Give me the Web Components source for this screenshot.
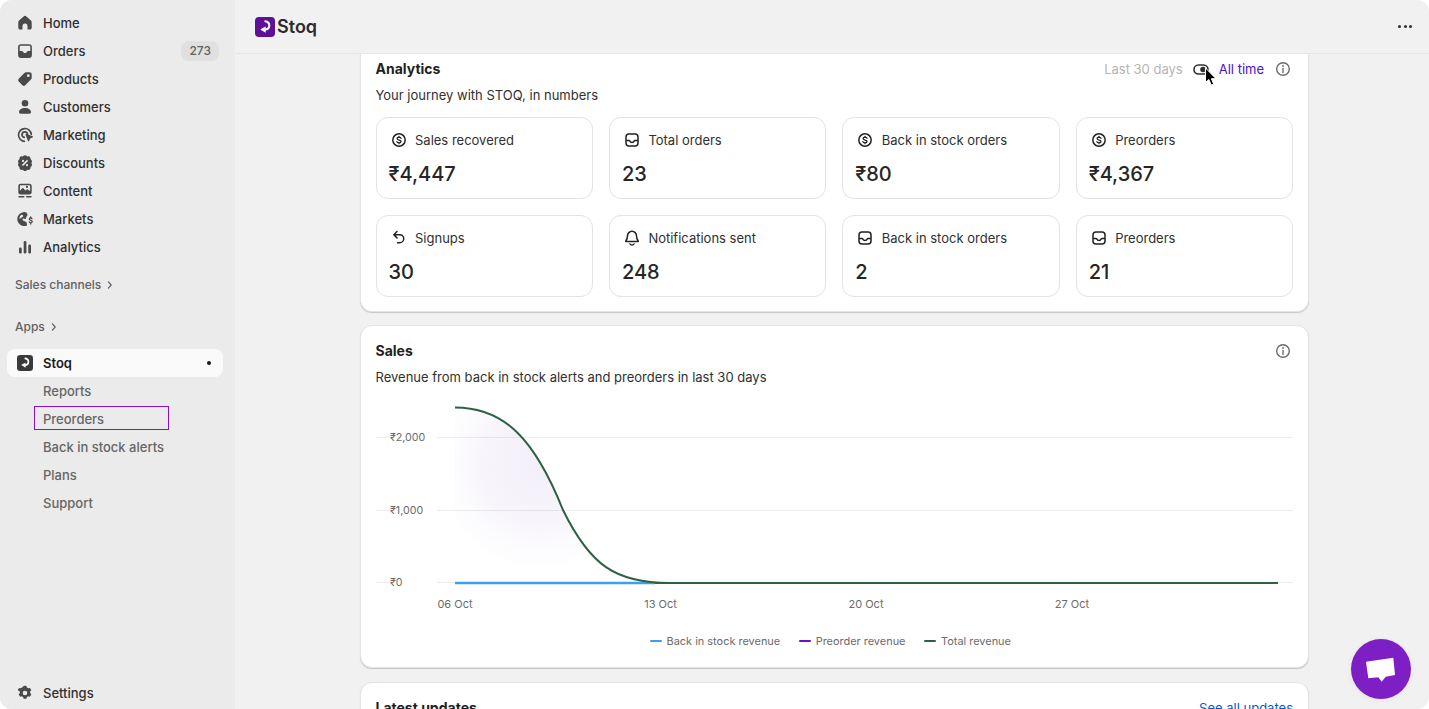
<!DOCTYPE html>
<html lang="en">
<head>
<meta charset="utf-8">
<title>Stoq</title>
<style>
html,body{margin:0;height:100%;background:#fff;overflow:hidden}
body{font-family:Inter,"Noto Sans",sans-serif;font-size:13px;color:#303030}
</style>
</head>
<body>
<app-shell>
  <side-nav slot="nav">
    <nav-item icon="home">Home</nav-item>
    <nav-item icon="orders" badge="273">Orders</nav-item>
    <nav-item icon="products">Products</nav-item>
    <nav-item icon="customers">Customers</nav-item>
    <nav-item icon="marketing">Marketing</nav-item>
    <nav-item icon="discounts">Discounts</nav-item>
    <nav-item icon="content">Content</nav-item>
    <nav-item icon="markets">Markets</nav-item>
    <nav-item icon="analytics">Analytics</nav-item>
    <nav-section style="margin-top:14px">Sales channels</nav-section>
    <nav-section style="margin-top:22px">Apps</nav-section>
    <nav-item icon="logo" active style="margin-top:12px">Stoq</nav-item>
    <nav-sub>Reports</nav-sub>
    <nav-sub outlined>Preorders</nav-sub>
    <nav-sub>Back in stock alerts</nav-sub>
    <nav-sub>Plans</nav-sub>
    <nav-sub>Support</nav-sub>
    <nav-item icon="settings" slot="foot">Settings</nav-item>
  </side-nav>
  <top-bar slot="top"></top-bar>
  <analytics-card>
    <stat-card icon="dollar" label="Sales recovered" value="₹4,447"></stat-card>
    <stat-card icon="inbox" label="Total orders" value="23"></stat-card>
    <stat-card icon="dollar" label="Back in stock orders" value="₹80"></stat-card>
    <stat-card icon="dollar" label="Preorders" value="₹4,367"></stat-card>
    <stat-card icon="undo" label="Signups" value="30"></stat-card>
    <stat-card icon="bell" label="Notifications sent" value="248"></stat-card>
    <stat-card icon="inbox" label="Back in stock orders" value="2"></stat-card>
    <stat-card icon="inbox" label="Preorders" value="21"></stat-card>
  </analytics-card>
  <sales-card></sales-card>
  <updates-card></updates-card>
  <chat-fab slot="overlay"></chat-fab>
</app-shell>
<script>
const ICONS = {
  home:'<path fill="currentColor" d="M8.600 3.500 4.300 7.200A3 3 0 0 0 3.300 9.500v5.200c0 1 .8 1.800 1.800 1.800h2.400V13a2.500 2.500 0 0 1 5 0v3.500h2.400c1 0 1.800-.8 1.800-1.800V9.500a3 3 0 0 0-1-2.300l-4.300-3.700a2.100 2.100 0 0 0-2.800 0z"/>',
  orders:'<path fill="currentColor" fill-rule="evenodd" d="M6 3.200h8A2.900 2.900 0 0 1 16.900 6.100v8a2.900 2.900 0 0 1-2.900 2.900H6a2.900 2.900 0 0 1-2.900-2.900V6.100A2.900 2.900 0 0 1 6 3.200zM5.800 4.800c-.6 0-1.100.5-1.100 1.100V10h2.200c.6 0 1 .3 1.200.8.300.8 1 1.300 1.900 1.300s1.600-.5 1.900-1.300c.2-.5.6-.8 1.200-.8h2.200V5.900c0-.6-.5-1.100-1.100-1.100z"/>',
  products:'<path fill="currentColor" fill-rule="evenodd" d="M11.200 3.300h3.400c1.200 0 2.100.9 2.100 2.100v3.400c0 .7-.3 1.300-.8 1.800l-5.700 5.700a2 2 0 0 1-2.800 0l-3.700-3.700a2 2 0 0 1 0-2.800L9.400 4.100c.5-.5 1.100-.8 1.800-.8zM13.300 8.100a1.400 1.400 0 1 0 0-2.800 1.400 1.400 0 0 0 0 2.800z"/>',
  customers:'<circle cx="10" cy="6.300" r="3.300" fill="currentColor"/><path fill="currentColor" d="M10 11c-3.600 0-6 1.700-6 4 0 1 .7 1.700 1.700 1.700h8.600c1 0 1.700-.7 1.700-1.700 0-2.300-2.400-4-6-4z"/>',
  marketing:'<path fill="none" stroke="currentColor" stroke-width="1.700" stroke-linecap="round" d="M16.300 9.300a6.400 6.400 0 1 0-6.900 7"/><path fill="none" stroke="currentColor" stroke-width="1.700" stroke-linecap="round" d="M12.600 9.300a2.800 2.800 0 1 0-3.300 3.100"/><path fill="currentColor" d="M10.600 9.900c-.2-.5.300-1 .8-.8l6.200 2.200c.6.200.6 1 0 1.200l-2.500.9-.9 2.500c-.2.600-1 .6-1.200 0z"/>',
  discounts:'<path fill="currentColor" fill-rule="evenodd" d="M8.500 2.700c.8-.7 2.200-.7 3 0l.8.7 1.100-.1c1.100-.1 2 .8 2.100 1.900l.1 1.100.8.700c.8.800.8 2.200 0 3l-.1.100.1.100c.8.800.8 2.200 0 3l-.8.700-.1 1.100c-.1 1.100-1 2-2.100 1.900l-1.100-.1-.8.700c-.8.700-2.200.7-3 0l-.8-.7-1.100.1c-1.100.1-2-.8-2.100-1.900l-.1-1.100-.8-.7c-.8-.8-.8-2.200 0-3l.1-.1-.1-.1c-.8-.8-.8-2.200 0-3l.8-.7.1-1.100c.1-1.100 1-2 2.100-1.900l1.100.1zM12.600 7.300a.8.8 0 0 0-1.100 0l-4.300 4.300a.8.800 0 0 0 1.100 1.100l4.300-4.300a.8.800 0 0 0 0-1.100zM8 9a1.100 1.100 0 1 0 0-2.200A1.100 1.100 0 0 0 8 9zm4 4.300a1.100 1.100 0 1 0 0-2.200 1.100 1.100 0 0 0 0 2.200z"/>',
  content:'<path fill="currentColor" fill-rule="evenodd" d="M5.500 2.700h9c1.200 0 2.200 1 2.200 2.200v6.300c0 1.200-1 2.200-2.200 2.200h-9a2.200 2.200 0 0 1-2.200-2.200V4.900c0-1.200 1-2.200 2.200-2.200zM4.900 9.800l2.400-2.500c.3-.3.700-.3 1 0l2.200 2.100 1.300-1c.3-.2.700-.2 1 0l2.300 1.700V5c0-.5-.4-.8-.8-.8H5.700c-.4 0-.8.300-.8.800zM12 7a1.100 1.100 0 1 0 0-2.200A1.100 1.100 0 0 0 12 7z"/><rect x="3.300" y="15" width="6.200" height="1.600" rx=".8" fill="currentColor"/><rect x="11" y="15" width="5.700" height="1.600" rx=".8" fill="currentColor"/>',
  markets:'<path fill="currentColor" fill-rule="evenodd" d="M11.500 3.400A7 7 0 1 0 12 16.500l-.1-1.800c0-1.100-.5-1.500-1.300-1.900L8.100 11.600c-.6-.3-.8-1-.5-1.500.3-.5.8-.6 1.300-.5l1.100.3c.6.100 1.100-.3 1.100-.9 0-.8.300-1.300.7-1.700.5-.5.700-1.200.6-2zM6.600 5.400l1.200.8c.5.400.5 1.100 0 1.500L5.300 9.600c-.4.300-.9.100-1-.3A5.500 5.500 0 0 1 6.600 5.400z"/><path fill="none" stroke="currentColor" stroke-width="1.300" stroke-linecap="round" d="M17 9.700c-.2-.5-.7-.8-1.300-.8-.8 0-1.400.5-1.400 1.200 0 1.500 2.900.9 2.900 2.500 0 .7-.7 1.200-1.500 1.200-.7 0-1.300-.3-1.500-.9M15.700 8v1M15.700 14v1"/>',
  analytics:'<rect x="4" y="10.500" width="2.700" height="6" rx="1.300" fill="currentColor"/><rect x="8.700" y="4" width="2.700" height="12.500" rx="1.300" fill="currentColor"/><rect x="13.300" y="7.500" width="2.700" height="9" rx="1.300" fill="currentColor"/>',
  settings:'<path fill="currentColor" fill-rule="evenodd" d="M8.600 2.900c.4-.1.900-.2 1.400-.2s1 .1 1.400.2l.5 1.700c.4.200.8.400 1.200.7l1.700-.4c.7.700 1.200 1.500 1.500 2.400l-1.200 1.300a5 5 0 0 1 0 1.400l1.200 1.300c-.3.900-.8 1.700-1.500 2.400l-1.700-.4c-.4.300-.8.500-1.200.7l-.5 1.700a6.700 6.700 0 0 1-2.800 0l-.5-1.700c-.4-.2-.8-.4-1.200-.7l-1.700.4a7 7 0 0 1-1.500-2.400l1.200-1.300a5 5 0 0 1 0-1.400L2.700 7.300c.3-.9.800-1.700 1.500-2.400l1.700.4c.4-.3.800-.5 1.200-.7zM10 12.300a2.300 2.300 0 1 0 0-4.600 2.300 2.300 0 0 0 0 4.600z"/>',
  dollar:'<circle cx="10" cy="10" r="6.200" fill="none" stroke="currentColor" stroke-width="1.500"/><path fill="none" stroke="currentColor" stroke-width="1.300" stroke-linecap="round" d="M12 8.300c-.2-.7-1-1.100-2-1.100-1.100 0-1.900.5-1.900 1.400 0 1.900 3.900 1 3.900 2.900 0 .9-.9 1.400-2 1.400s-1.900-.4-2.100-1.200M10 6.300v1M10 12.700v1"/>',
  inbox:'<rect x="4" y="4" width="12" height="12" rx="3" fill="none" stroke="currentColor" stroke-width="1.500"/><path fill="none" stroke="currentColor" stroke-width="1.500" stroke-linejoin="round" d="M4 10.500h2.900c.5 0 .8.300 1 .7.300.8 1.100 1.300 2.100 1.300s1.800-.5 2.100-1.300c.2-.4.500-.7 1-.7H16"/>',
  undo:'<path fill="none" stroke="currentColor" stroke-width="1.500" stroke-linecap="round" stroke-linejoin="round" d="M8 3.500 4.800 6.700l3.200 3.200M5.200 6.700h5.500a4 4 0 0 1 0 8H8.500"/>',
  bell:'<path fill="none" stroke="currentColor" stroke-width="1.500" stroke-linejoin="round" d="M10 3.300a4.500 4.500 0 0 0-4.500 4.500c0 2.700-.6 3.800-1.700 5.200-.2.300 0 .6.300.6h11.800c.3 0 .5-.3.300-.6-1.100-1.400-1.700-2.500-1.700-5.200A4.500 4.500 0 0 0 10 3.300z"/><path fill="none" stroke="currentColor" stroke-width="1.500" stroke-linecap="round" d="M8 16c.4.700 1.100 1 2 1s1.600-.3 2-1"/>',
  info:'<circle cx="10" cy="10" r="6.300" fill="none" stroke="currentColor" stroke-width="1.400"/><circle cx="10" cy="7" r=".9" fill="currentColor"/><path stroke="currentColor" stroke-width="1.400" stroke-linecap="round" d="M10 9.500v4"/>',
  chev:'<path fill="none" stroke="currentColor" stroke-width="1.500" stroke-linecap="round" stroke-linejoin="round" d="M8 6l3.500 4L8 14"/>',
  logoMark:'<path fill="none" stroke="#fff" stroke-width="2" stroke-linecap="round" d="M10.300 4.200c2.800.5 4.100 2.300 4 4.400-.1 2.400-1.900 3.900-4.300 4"/><path fill="#fff" d="M10.700 9.600v6.200L6 12.900c-.4-.2-.4-.7 0-.9z"/>'
};
const svg = (name, size=20) => `<svg width="${size}" height="${size}" viewBox="0 0 20 20" aria-hidden="true" style="display:block;flex:none">${ICONS[name]}</svg>`;
const logo = (size, bg) => `<svg width="${size}" height="${size}" viewBox="0 0 20 20" aria-hidden="true" style="display:block;flex:none"><rect width="20" height="20" rx="4" fill="${bg}"/>${ICONS.logoMark}</svg>`;

class Base extends HTMLElement {
  render(html){ (this.shadowRoot || this.attachShadow({mode:'open'})).innerHTML = html; }
}
customElements.define('app-shell', class extends Base { connectedCallback(){ this.render(`<style>
  :host{display:flex;height:100vh;width:100%;background:#f1f1f1;border-radius:12px;overflow:hidden;position:relative}
  .nav{flex:none;width:235px;height:100%;display:flex}
  .main{flex:1;min-width:0;display:flex;flex-direction:column;height:100%}
  .scroll{flex:1;min-height:0;overflow:hidden;padding:0 120px 0 125px;display:flex;flex-direction:column}
</style>
<div class="nav"><slot name="nav"></slot></div>
<div class="main"><slot name="top"></slot><div class="scroll"><slot></slot></div></div>
<slot name="overlay"></slot>`);}});

customElements.define('side-nav', class extends Base { connectedCallback(){ this.render(`<style>
  :host{display:flex;flex-direction:column;width:235px;height:100%;box-sizing:border-box;background:#ebebeb;padding:9px 12px 2px 7px}
  .list{flex:1;display:flex;flex-direction:column}
</style>
<div class="list"><slot></slot></div><slot name="foot"></slot>`);}});

customElements.define('nav-item', class extends Base { connectedCallback(){
  const ic=this.getAttribute('icon'), b=this.getAttribute('badge'), active=this.hasAttribute('active');
  this.render(`<style>
  :host{display:flex;flex:none;height:28px}
  .row{flex:1;display:flex;align-items:center;gap:8px;padding:0 4px 0 8px;border-radius:8px;color:#303030;font:500 13px/20px Inter,sans-serif}
  .row.on{background:#fafafa;color:#1a1a1a;font-weight:600}
  .ic{color:#4a4a4a;width:20px;height:20px;display:flex;align-items:center;justify-content:center}
  .t{flex:1}
  .badge{background:#e0e0e0;color:#616161;font:450 12px/20px Inter,sans-serif;border-radius:8px;padding:0 8px;height:20px}
  .dot{width:4px;height:4px;border-radius:50%;background:#1a1a1a;margin-right:8px}
  </style><div class="row ${active?'on':''}"><span class="ic">${ic==='logo'?logo(16,'#3a3a3a'):svg(ic)}</span><span class="t"><slot></slot></span>${b?`<span class="badge">${b}</span>`:''}${active?'<span class="dot"></span>':''}</div>`);
}});

customElements.define('nav-section', class extends Base { connectedCallback(){ this.render(`<style>
  :host{display:flex;flex:none;align-items:center;height:20px;padding-left:8px;color:#616161;font:450 12px/20px Inter,sans-serif}
  .c{color:#616161;margin-left:1px}
  </style><slot></slot><span class="c">${svg('chev',16)}</span>`);
}});

customElements.define('nav-sub', class extends Base { connectedCallback(){
  const o=this.hasAttribute('outlined');
  this.render(`<style>
  :host{display:flex;flex:none;height:28px;align-items:center;padding-left:27px;color:#666;font:450 13px/20px Inter,sans-serif}
  .b{display:flex;align-items:center;box-sizing:border-box;padding-left:9px;height:24px;width:135px}
  .b.o{border:1px solid #8a0fd0;padding:2px 0 0 8px;margin-bottom:2px}
  </style><div class="b ${o?'o':''}"><slot></slot></div>`);
}});

customElements.define('top-bar', class extends Base { connectedCallback(){ this.render(`<style>
  :host{display:flex;flex:none;box-sizing:border-box;height:54px;align-items:center;padding:0 17px 0 20px;background:#f1f1f1;border-bottom:1px solid #e6e6e6;gap:2px}
  .brand{font:600 18px/28px Inter,sans-serif;color:#2b2b2b;flex:1}
  .dots{display:flex;gap:2.500px}
  .dots i{display:block;width:3px;height:3px;border-radius:50%;background:#303030}
  </style>${logo(20,'#5e1196')}<div class="brand">Stoq</div><div class="dots"><i></i><i></i><i></i></div>`);
}});

const cardCss = `
  :host{display:block;flex:none;box-sizing:border-box;background:#fff;border:1px solid #e3e3e3;border-radius:12px;box-shadow:0 1px 1px rgba(0,0,0,.18);padding:15px 15px 15px 14.5px}
  .title{font:650 14px/20px Inter,sans-serif;color:#1f1f1f}
  .sub{font:400 13px/20px Inter,sans-serif;color:#303030;margin-top:6px}
  .head{display:flex;align-items:center;justify-content:space-between}
  .info{color:#6b6b6b}
`;
customElements.define('analytics-card', class extends Base { connectedCallback(){ this.render(`<style>${cardCss}
  :host{border-top:0;border-radius:0 0 12px 12px;padding-top:5px;height:258px}
  .ctl{display:flex;align-items:center;position:relative;font:400 13px/20px Inter,sans-serif}
  .muted{color:#b5b5b5}
  .tog{width:16px;height:11px;margin:0 10px 0 10px;display:block}
  .on{color:#4b0fd6}
  .info{margin:0 0 0 9px;color:#6b6b6b}
  .cursor{position:absolute;right:75.500px;top:8px;pointer-events:none}
  .grid{display:grid;grid-template-columns:repeat(4,1fr);gap:16px;margin-top:12px}
  </style>
  <div class="head"><div class="title">Analytics</div>
    <div class="ctl"><span class="muted">Last 30 days</span>
      <svg class="tog" viewBox="0 0 16 11"><rect x="1" y="1" width="14" height="9" rx="4.500" fill="#fff" stroke="#303030" stroke-width="1.600"/><circle cx="10" cy="5.500" r="2.800" fill="#303030"/></svg>
      <span class="on">All time</span><span class="info">${svg('info')}</span>
      <svg class="cursor" width="14" height="20" viewBox="0 0 14 20"><path d="M1.500 1v14.500l3.400-3 2.300 5.500 2.500-1-2.300-5.300h4.600z" fill="#000" stroke="#fff" stroke-width="1"/></svg>
    </div></div>
  <div class="sub">Your journey with STOQ, in numbers</div>
  <div class="grid"><slot></slot></div>`);
}});

customElements.define('stat-card', class extends Base { connectedCallback(){ this.render(`<style>
  :host{display:block;box-sizing:border-box;height:82px;border:1px solid #e3e3e3;border-radius:12px;padding:12px 12px 10px;background:#fff}
  .l{display:flex;align-items:center;gap:6.500px;font:400 13px/20px Inter,sans-serif;color:#303030}
  .ic{color:#222}
  .v{font:500 20px/28px Inter,sans-serif;color:#262626;margin-top:10px}
  </style><div class="l"><span class="ic">${svg(this.getAttribute('icon'))}</span>${this.getAttribute('label')}</div><div class="v">${this.getAttribute('value')}</div>`);
}});

customElements.define('sales-card', class extends Base { connectedCallback(){ this.render(`<style>${cardCss}
  :host{margin-top:13px;height:343px}
  svg.c{display:block;width:917px;height:230px;margin-top:3px}
  svg.c text{font:400 10.700px Inter,sans-serif;fill:#6b6b6b}
  svg.c text.x{font-size:11px}
  .leg{display:flex;justify-content:center;gap:18.500px;margin-top:11px;font:400 10.950px/20px Inter,sans-serif;color:#6b6b6b;padding-right:8px}
  .leg span{display:flex;align-items:center;gap:5px}
  .leg i{display:block;width:12px;height:2px;border-radius:1px}
  </style>
  <div class="head"><div class="title">Sales</div><span class="info">${svg('info')}</span></div>
  <div class="sub">Revenue from back in stock alerts and preorders in last 30 days</div>
  <svg class="c" viewBox="376 390 917 230">
    <defs><radialGradient id="a" gradientUnits="userSpaceOnUse" cx="540" cy="465" r="105">
      <stop offset="0" stop-color="#6a3fb0" stop-opacity=".085"/><stop offset=".55" stop-color="#6a3fb0" stop-opacity=".05"/><stop offset="1" stop-color="#6a3fb0" stop-opacity="0"/></radialGradient></defs>
    <g stroke="#ececec" stroke-width="1"><path d="M376 437.500H1293M376 510.500H1293M376 582.500H1293"/></g>
    <rect x="389" y="425" width="48" height="165" fill="#fff"/>
    <text x="390" y="441">₹2,000</text><text x="390" y="514">₹1,000</text><text x="390" y="586">₹0</text>
    <path d="M455 407.500C505 407.500 535 440 563 510 590 565 615 583 670 583H455Z" fill="url(#a)"/>
    <path d="M650 583H1278" stroke="#2e6144" stroke-width="2" fill="none"/>
    <path d="M455 583H655" stroke="#3ea0ea" stroke-width="2.300" fill="none"/>
    <path d="M455 407.500C505 407.500 535 440 563 510 590 565 615 583 670 583" stroke="#2e6144" stroke-width="2" fill="none"/>
    <text class="x" x="455" y="608" text-anchor="middle">06 Oct</text><text class="x" x="660.500" y="608" text-anchor="middle">13 Oct</text><text class="x" x="866" y="608" text-anchor="middle">20 Oct</text><text class="x" x="1072" y="608" text-anchor="middle">27 Oct</text>
  </svg>
  <div class="leg"><span><i style="background:#3ea0ea"></i>Back in stock revenue</span><span><i style="background:#6a0fd0"></i>Preorder revenue</span><span><i style="background:#2e6144"></i>Total revenue</span></div>`);
}});

customElements.define('updates-card', class extends Base { connectedCallback(){ this.render(`<style>${cardCss}
  :host{margin-top:14px;height:120px}
  a{color:#005bd3;font:400 13px/20px Inter,sans-serif;text-decoration:none}
  </style><div class="head"><div class="title">Latest updates</div><a>See all updates</a></div>`);
}});

customElements.define('chat-fab', class extends Base { connectedCallback(){ this.render(`<style>
  :host{position:absolute;right:18px;bottom:10px;width:60px;height:60px;display:block;border-radius:50%;background:#7e1fc5;box-shadow:0 1px 6px rgba(0,0,0,.06)}
  svg{display:block}
  </style><svg width="60" height="60" viewBox="0 0 60 60"><path fill="#fff" d="M15 22.700 42.300 18.700 44 36 34.700 37.700 30.700 42.700 27.300 38.300 17.300 39.300z"/></svg>`);
}});
</script>
</body>
</html>
